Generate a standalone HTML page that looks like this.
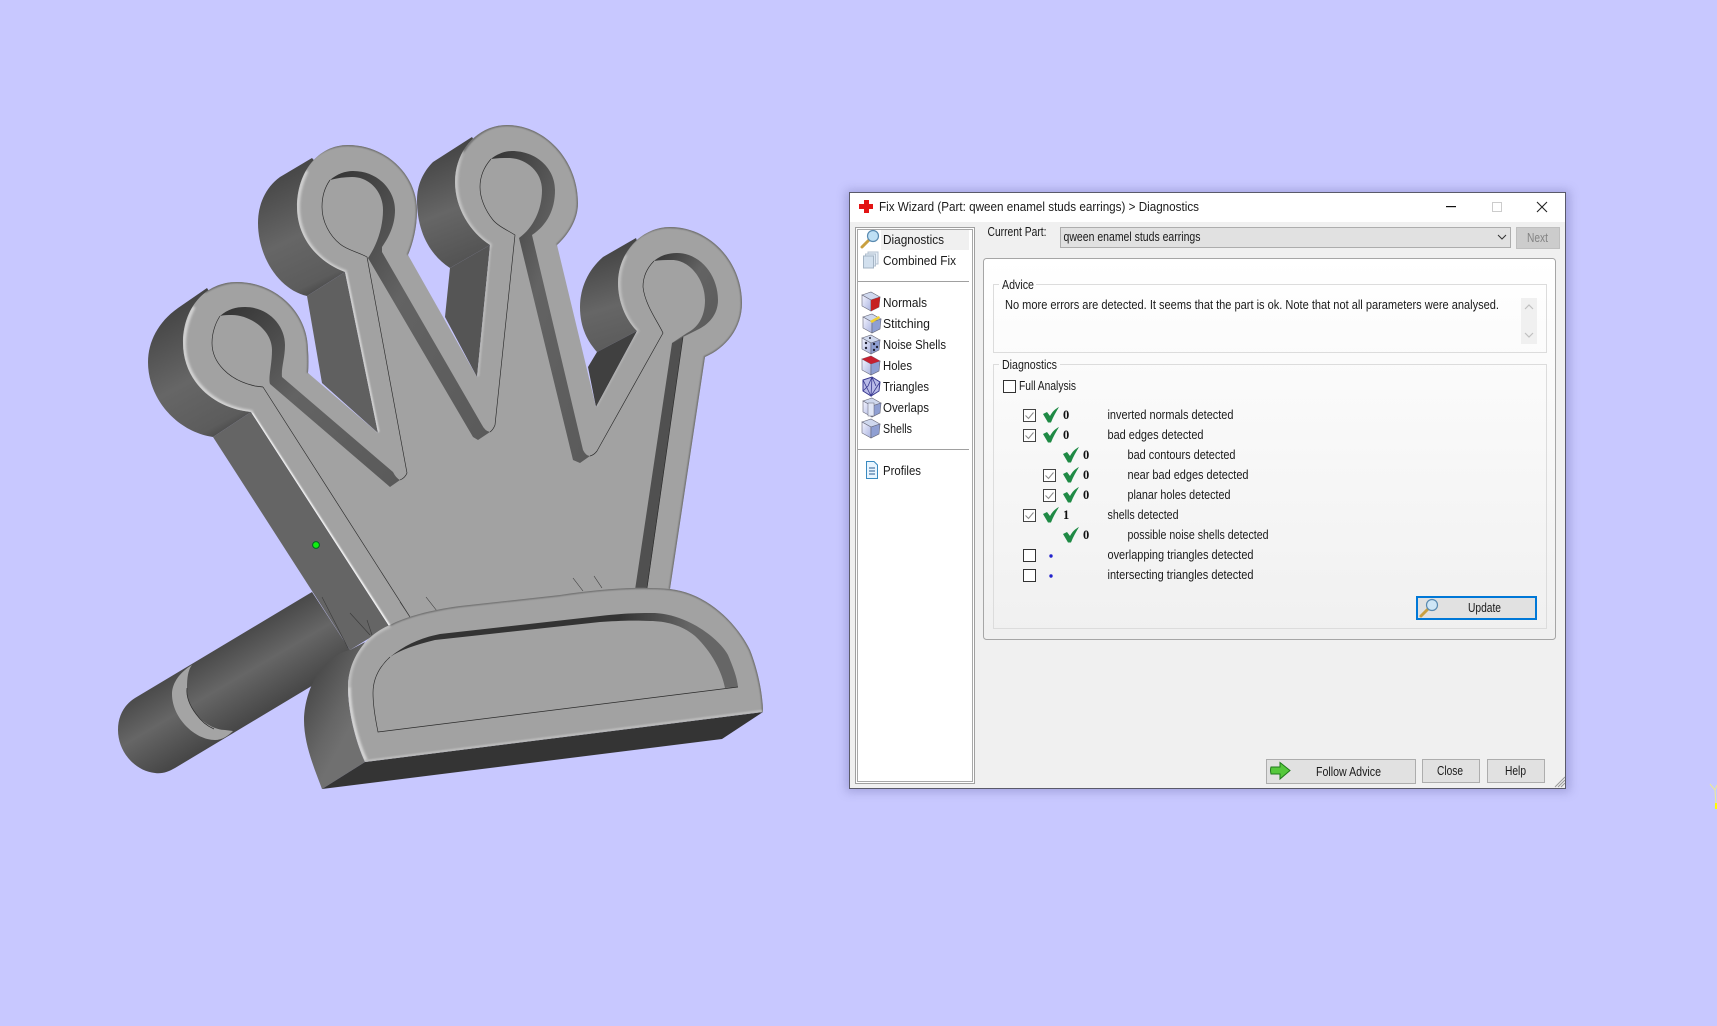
<!DOCTYPE html>
<html><head><meta charset="utf-8"><title>Fix Wizard</title>
<style>
html,body{margin:0;padding:0;background:#c8c8ff;width:1717px;height:1026px;overflow:hidden}
svg{display:block;position:absolute;left:0;top:0}
text{font-family:"Liberation Sans",sans-serif;font-size:12.5px;fill:#1a1a1a}
.n{font-family:"Liberation Serif",serif;font-weight:bold;font-size:12.5px;fill:#111}
</style></head><body>
<svg width="1717" height="1026" viewBox="0 0 1717 1026" xmlns="http://www.w3.org/2000/svg">
<defs>
<filter id="b1" x="-20%" y="-20%" width="140%" height="140%"><feGaussianBlur stdDeviation="0.8"/></filter>
<filter id="b2" x="-20%" y="-20%" width="140%" height="140%"><feGaussianBlur stdDeviation="1.2"/></filter>
<filter id="sh" x="-5%" y="-5%" width="110%" height="110%"><feGaussianBlur stdDeviation="5"/></filter>
<clipPath id="fc"><path d="M251 412C212 408 183 380 183 343C183 308 205 282 237 282C275 282 308 312 308 350Q309 362 308 373L378 433L345 272C318 262 297 238 297 207C297 172 318 145 348 145C386 145 417 175 417 210C417 228 413 243 408 255L477 377L490 245C470 232 455 208 455 182C455 150 478 125 507 125C545 125 578 160 578 203C578 220 568 235 557 245L596 407L637 331C626 320 618 302 618 283C618 252 642 227 670 227C710 227 742 262 742 303C742 328 726 348 705 357L670 589L400 640L389 626Z"/></clipPath>
<clipPath id="bc"><path d="M348 687C348 660 365 635 390 625C405 617 430 610 460 606L560 595C600 589 640 586 670 589C705 593 735 620 750 650C758 670 763 695 763 712L365 762C355 740 348 710 348 687Z"/></clipPath>
<linearGradient id="pin" gradientUnits="userSpaceOnUse" x1="205" y1="640" x2="255" y2="725"><stop offset="0" stop-color="#3f3f3f"/><stop offset=".5" stop-color="#666"/><stop offset="1" stop-color="#434343"/></linearGradient>
<linearGradient id="s1" gradientUnits="userSpaceOnUse" x1="165" y1="310" x2="235" y2="440"><stop offset="0" stop-color="#444"/><stop offset=".5" stop-color="#666"/><stop offset=".85" stop-color="#5c5c5c"/><stop offset="1" stop-color="#3a3a3a"/></linearGradient>
<linearGradient id="s2" gradientUnits="userSpaceOnUse" x1="275" y1="170" x2="335" y2="295"><stop offset="0" stop-color="#444"/><stop offset=".5" stop-color="#666"/><stop offset=".85" stop-color="#5c5c5c"/><stop offset="1" stop-color="#3a3a3a"/></linearGradient>
<linearGradient id="s3" gradientUnits="userSpaceOnUse" x1="435" y1="150" x2="480" y2="265"><stop offset="0" stop-color="#444"/><stop offset=".5" stop-color="#666"/><stop offset="1" stop-color="#505050"/></linearGradient>
<linearGradient id="s4" gradientUnits="userSpaceOnUse" x1="600" y1="250" x2="630" y2="350"><stop offset="0" stop-color="#444"/><stop offset=".55" stop-color="#666"/><stop offset="1" stop-color="#5a5a5a"/></linearGradient>
<linearGradient id="w" x1="0" y1="0" x2="1" y2="1"><stop offset="0" stop-color="#333"/><stop offset=".45" stop-color="#636363"/><stop offset="1" stop-color="#5a5a5a"/></linearGradient>
<linearGradient id="bw" gradientUnits="userSpaceOnUse" x1="620" y1="0" x2="690" y2="0"><stop offset="0" stop-color="#333"/><stop offset="1" stop-color="#666"/></linearGradient>
<linearGradient id="bl" gradientUnits="userSpaceOnUse" x1="305" y1="680" x2="360" y2="710"><stop offset="0" stop-color="#464646"/><stop offset=".7" stop-color="#666"/><stop offset="1" stop-color="#707070"/></linearGradient>
<linearGradient id="panel" x1="0" y1="0" x2="0" y2="1"><stop offset="0" stop-color="#fff"/><stop offset="1" stop-color="#f0f0f0"/></linearGradient>
<linearGradient id="face" x1="0" y1="0" x2="1" y2="1"><stop offset="0" stop-color="#f4f4ff"/><stop offset="1" stop-color="#aab4e0"/></linearGradient>
<g id="cube">
<path d="M1 3L10 0L19 5L10 8Z" fill="#cfd8ee" stroke="#667" stroke-width=".6"/>
<path d="M1 3L10 8L10 19L1 14Z" fill="url(#face)" stroke="#667" stroke-width=".6"/>
<path d="M10 8L19 5L18 15L10 19Z" fill="#8f9fd2" stroke="#667" stroke-width=".6"/>
</g>
<path id="ck" d="M0 7L4 5L7 9C9 5 12 2 16 0C13 5 10 10 8 15.5L5 15.5Z" fill="#1f8a45"/>
<g id="cb"><rect x=".5" y=".5" width="12" height="12" fill="#fff" stroke="#444"/><path d="M2.5 6.5L5.5 9.5L10.5 3.5" fill="none" stroke="#888" stroke-width="1"/></g>
<g id="ub"><rect x=".5" y=".5" width="12" height="12" fill="#fff" stroke="#333"/></g>
</defs>

<rect width="1717" height="1026" fill="#c8c8ff"/>

<!-- PIN -->
<path d="M135 698L312 592L350 650L350 663L175 768C168 772 162 774 155 773C135 771 118 752 118 730C118 716 124 705 135 698Z" fill="url(#pin)"/>
<path d="M192 665C180 672 172 683 172 694C172 718 195 740 215 740C222 740 228 736 233 731L225 730C216 730 204 724 196 714C190 706 186 697 187 688C187 678 188 670 192 665Z" fill="#a4a4a4"/>
<path d="M187 688C186 697 190 706 196 714C201 721 207 726 214 729" fill="none" stroke="#2e2e2e" stroke-width=".7"/>

<!-- SIDE WALLS -->
<path d="M207 288L178 308C158 322 148 342 148 362C148 400 178 432 213 437L251 412L240 340Z" fill="url(#s1)"/>
<path d="M213 437L251 412L389 626L350 650Z" fill="#656565"/>
<path d="M312 158L280 177C265 188 258 205 258 223C258 258 280 290 307 296L345 272L350 200Z" fill="url(#s2)"/>
<path d="M307 296L345 272L378 433L322 383Z" fill="#606060"/>
<path d="M472 137L433 162C423 172 417 185 417 200C417 232 430 255 450 268L490 245L500 180Z" fill="url(#s3)"/>
<path d="M450 268L490 245L477 377L445 317Z" fill="#555"/>
<path d="M636 238L603 257C588 270 580 288 580 307C580 328 588 342 597 352L637 331L650 280Z" fill="url(#s4)"/>
<path d="M597 352L637 331L596 407L588 367Z" fill="#404040"/>

<!-- FRONT -->
<path d="M251 412C212 408 183 380 183 343C183 308 205 282 237 282C275 282 308 312 308 350Q309 362 308 373L378 433L345 272C318 262 297 238 297 207C297 172 318 145 348 145C386 145 417 175 417 210C417 228 413 243 408 255L477 377L490 245C470 232 455 208 455 182C455 150 478 125 507 125C545 125 578 160 578 203C578 220 568 235 557 245L596 407L637 331C626 320 618 302 618 283C618 252 642 227 670 227C710 227 742 262 742 303C742 328 726 348 705 357L670 589L400 640L389 626Z" fill="#a2a2a2"/>
<g clip-path="url(#fc)">
<path d="M237 282C275 282 308 312 308 350Q309 362 308 373M408 255C413 243 417 228 417 210C417 175 386 145 348 145C328 145 312 155 303 172M457 165C465 142 484 125 507 125C545 125 578 160 578 203C578 220 568 235 557 245M622 258C630 240 648 227 670 227C710 227 742 262 742 303C742 328 726 348 705 357L670 589M205 292C215 286 225 282 237 282" fill="none" stroke="#6e6e6e" stroke-width="2.4" filter="url(#b1)"/>
<g fill="none" stroke-linecap="round">
<path d="M252 414L389 626" stroke="#f6f6f6" stroke-width="3.4" filter="url(#b1)"/>
<path d="M251 412C213 407 185 380 184 345C184 332 187 320 193 308" stroke="#d8d8d8" stroke-width="3.6" filter="url(#b2)"/>
<path d="M346 274L378 431" stroke="#d0d0d0" stroke-width="3" filter="url(#b1)"/>
<path d="M345 272C318 262 298 238 298 207C298 195 301 183 306 172" stroke="#d4d4d4" stroke-width="3.6" filter="url(#b2)"/>
<path d="M490 247L478 375" stroke="#b8b8b8" stroke-width="3" filter="url(#b1)"/>
<path d="M490 245C470 232 456 208 456 182C456 172 458 162 462 152" stroke="#c8c8c8" stroke-width="3.6" filter="url(#b2)"/>
<path d="M636 333L597 405" stroke="#b0b0b0" stroke-width="3" filter="url(#b1)"/>
<path d="M637 331C626 320 619 302 619 283C619 274 621 265 625 256" stroke="#c4c4c4" stroke-width="3.2" filter="url(#b2)"/>
</g>
</g>

<!-- RECESS WALLS -->
<path d="M220 316C228 309 236 307 245 307C268 307 285 325 285 345C285 358 281 368 282 377L393 472Q396 478 400 480L390 487L270 384C268 378 272 365 272 350C272 330 250 315 232 315C228 315 224 315 220 316Z" fill="url(#w)"/>
<path d="M330 180C337 174 345 171 353 171C378 171 395 190 395 210C395 225 389 237 382 247L382 252L482 425Q485 431 490 432L478 440L473 437L368 258C375 248 383 230 383 210C383 192 370 177 352 177C345 177 337 178 330 180Z" fill="url(#w)"/>
<path d="M491 159C497 154 505 151 512 151C536 151 555 168 555 190C555 210 547 225 532 235L583 450Q586 456 590 456L580 463L573 460L519 238C533 228 542 210 542 190C542 172 527 159 510 158C503 158 497 158 491 159Z" fill="url(#w)"/>
<path d="M654 261C661 255 669 253 677 253C700 253 718 275 718 300C718 315 708 325 697 330L683 337L672 343L687 333C697 328 705 318 705 300C705 280 690 260 672 260C666 260 660 260 654 261Z" fill="url(#w)"/>
<path d="M672 343L683 337L647 590L635 590Z" fill="#505050"/>

<!-- plate lines -->
<g fill="none" stroke="#2a2a2a" stroke-width=".65">
<path d="M263 387L255 386C228 380 212 362 212 343C212 332 216 322 220 316"/>
<path d="M263 387L410 617"/>
<path d="M400 480Q405 478 407 473L367 257C358 252 347 250 340 244C330 236 322 222 322 207C322 196 325 187 330 180"/>
<path d="M490 432Q493 430 495 425L515 235C507 230 498 226 493 220C485 210 480 198 480 187C480 176 484 167 491 159"/>
<path d="M590 456Q594 455 597 451L663 333C658 322 645 305 643 287C643 277 647 268 654 261"/>
<path d="M683 337L647 588"/>
<path d="M322 597L348 648M350 613L370 635M367 620L372 635M400 602L410 617M426 597L437 611M573 578L583 591M594 576L602 588" stroke="#3a3a3a" stroke-width=".6"/>
</g>

<!-- BASE -->
<path d="M350 650C325 655 305 685 304 720C304 745 315 770 322 789L365 762C355 740 348 710 348 687C348 670 355 660 365 642Z" fill="url(#bl)"/>
<path d="M365 762L763 712L722 739L322 789Z" fill="#343434"/>
<path d="M348 687C348 660 365 635 390 625C405 617 430 610 460 606L560 595C600 589 640 586 670 589C705 593 735 620 750 650C758 670 763 695 763 712L365 762C355 740 348 710 348 687Z" fill="#a2a2a2"/>
<g clip-path="url(#bc)" fill="none">
<path d="M390 625C405 617 430 610 460 606L560 595C600 589 640 586 670 589C705 593 735 620 750 650C758 670 763 695 763 712" stroke="#6e6e6e" stroke-width="2.4" filter="url(#b1)"/>
<path d="M349 687C349 660 365 636 390 626" stroke="#c4c4c4" stroke-width="3" filter="url(#b2)"/>
<path d="M349 687C349 710 356 740 366 761" stroke="#dcdcdc" stroke-width="3.4" filter="url(#b2)"/>
<path d="M366 761L762 711" stroke="#bcbcbc" stroke-width="2.4" filter="url(#b1)"/>
</g>
<path d="M390 657C405 645 420 638 440 634L600 616C625 613 640 613 655 613C690 615 720 640 728 655C733 667 737 677 738 687L725 688C722 672 712 652 695 636C682 625 665 621 650 621C630 620 615 621 600 622L435 640C415 645 400 650 390 657Z" fill="url(#bw)"/>
<path d="M390 657C378 668 373 680 373 693C373 708 376 722 378 732L738 687" fill="none" stroke="#2a2a2a" stroke-width=".65"/>

<!-- green marker -->
<circle cx="316" cy="545" r="3.4" fill="#10f010" stroke="#062" stroke-width="1"/>
<path d="M1710 784L1715 790L1716 806M1717 785L1715 790" fill="none" stroke="#ecec90" stroke-width="1"/>
<rect x="1715" y="803" width="2" height="6" fill="#ff0"/>

<!-- DIALOG -->
<rect x="846" y="190" width="724" height="602" fill="#6060a0" opacity=".35" filter="url(#sh)"/>
<rect x="849.5" y="192.5" width="716" height="596" fill="#f0f0f0" stroke="#5a5a6a"/>
<rect x="850" y="193" width="715" height="29" fill="#fff"/>
<path d="M864 200H869V204H873V209H869V213H864V209H859V204H864Z" fill="#e31414"/>
<text x="879" y="211" textLength="320" lengthAdjust="spacingAndGlyphs">Fix Wizard (Part: qween enamel studs earrings) &gt; Diagnostics</text>
<rect x="1446" y="206" width="10" height="1.2" fill="#111"/>
<rect x="1492.5" y="202.5" width="9" height="9" fill="none" stroke="#ccc"/>
<path d="M1537 202L1547 212M1547 202L1537 212" stroke="#222" stroke-width="1.1"/>

<!-- list -->
<rect x="855.5" y="227.5" width="119" height="556" fill="#fff" stroke="#a0a0a0"/>
<rect x="857.5" y="229.5" width="115" height="552" fill="#fff" stroke="#a8a8a8"/>
<rect x="881" y="230" width="88" height="20" fill="#f0f0f0"/>
<rect x="858" y="281" width="111" height="1" fill="#a0a0a0"/>
<rect x="858" y="449" width="111" height="1" fill="#a0a0a0"/>

<!-- icons -->
<g transform="translate(861,230)"><path d="M1 17L8 10" stroke="#c9a040" stroke-width="3" stroke-linecap="round"/><circle cx="12" cy="6" r="5.5" fill="#bfe0f5" stroke="#5a8ab0" stroke-width="1.2"/></g>
<g transform="translate(863,252)"><rect x="5" y="0" width="10" height="12" fill="#e6eef8" stroke="#b4c2d0"/><rect x="2.5" y="2" width="10" height="12" fill="#dde8f4" stroke="#b4c2d0"/><rect x="0.5" y="4" width="10" height="12" fill="#d2e0ee" stroke="#a4b4c4"/></g>
<g transform="translate(861,292)"><use href="#cube"/><path d="M10 8L19 5L18 15L10 19Z" fill="#c62020"/></g>
<g transform="translate(862,314)"><use href="#cube"/><path d="M8 7L17 2L18 4L10 9Z" fill="#f0d030"/></g>
<g transform="translate(861,335)"><use href="#cube"/><g fill="#223"><circle cx="5" cy="8" r="1.2"/><circle cx="5" cy="13" r="1.2"/><circle cx="13" cy="9" r="1.2"/><circle cx="16" cy="12" r="1.2"/><circle cx="13" cy="15" r="1.2"/><circle cx="9" cy="3" r="1"/></g></g>
<g transform="translate(861,356)"><use href="#cube"/><path d="M1 3L10 0L19 5L10 8Z" fill="#c62030"/></g>
<g transform="translate(861,377)"><path d="M2 3L11 0L19 5L18 14L10 19L2 14Z" fill="#b9bbe8" stroke="#3a3a90" stroke-width="1"/><path d="M2 3L10 19L11 0M19 5L10 19M11 0L7 9L2 14M11 0L15 9" fill="none" stroke="#3a3a90" stroke-width=".8"/></g>
<g transform="translate(862,398)"><use href="#cube"/><rect x="6" y="5" width="6" height="13" fill="#e0e6f6" stroke="#667" stroke-width=".5"/></g>
<g transform="translate(861,419)"><use href="#cube"/></g>
<g transform="translate(866,461)"><path d="M.5 .5H8L11.5 4V17.5H.5Z" fill="#e8f5ff" stroke="#3a8ac0"/><path d="M3 7H9M3 10H9M3 13H9" stroke="#2a5a90" stroke-width="1"/></g>

<text x="883" y="244" textLength="61" lengthAdjust="spacingAndGlyphs">Diagnostics</text>
<text x="883" y="265" textLength="73" lengthAdjust="spacingAndGlyphs">Combined Fix</text>
<text x="883" y="307" textLength="44" lengthAdjust="spacingAndGlyphs">Normals</text>
<text x="883" y="328" textLength="47" lengthAdjust="spacingAndGlyphs">Stitching</text>
<text x="883" y="349" textLength="63" lengthAdjust="spacingAndGlyphs">Noise Shells</text>
<text x="883" y="370" textLength="29" lengthAdjust="spacingAndGlyphs">Holes</text>
<text x="883" y="391" textLength="46" lengthAdjust="spacingAndGlyphs">Triangles</text>
<text x="883" y="412" textLength="46" lengthAdjust="spacingAndGlyphs">Overlaps</text>
<text x="883" y="433" textLength="29" lengthAdjust="spacingAndGlyphs">Shells</text>
<text x="883" y="475" textLength="38" lengthAdjust="spacingAndGlyphs">Profiles</text>

<!-- top row -->
<text x="987.5" y="236" textLength="59" lengthAdjust="spacingAndGlyphs">Current Part:</text>
<rect x="1060.5" y="227.5" width="450" height="20" fill="#e1e1e1" stroke="#adadad"/>
<text x="1063.5" y="241" textLength="137" lengthAdjust="spacingAndGlyphs">qween enamel studs earrings</text>
<path d="M1498 235L1502 239L1506 235" fill="none" stroke="#333" stroke-width="1"/>
<rect x="1516.5" y="227.5" width="43" height="21" fill="#ccc" stroke="#bfbfbf"/>
<text x="1527" y="242" textLength="21" lengthAdjust="spacingAndGlyphs" style="fill:#838383">Next</text>

<!-- panel -->
<rect x="983.5" y="258.5" width="572" height="381" rx="3" fill="url(#panel)" stroke="#a6a6a6"/>

<!-- Advice -->
<rect x="993.5" y="284.5" width="553" height="68" fill="none" stroke="#dcdcdc"/>
<rect x="999" y="280" width="37" height="10" fill="#fdfdfd"/>
<text x="1002" y="289" textLength="32" lengthAdjust="spacingAndGlyphs">Advice</text>
<text x="1005" y="309" textLength="494" lengthAdjust="spacingAndGlyphs">No more errors are detected. It seems that the part is ok. Note that not all parameters were analysed.</text>
<rect x="1521" y="298" width="16" height="46" fill="#f0f0f0"/>
<path d="M1525 309L1529 305L1533 309M1525 333L1529 337L1533 333" fill="none" stroke="#c0c0c0" stroke-width="1.2"/>

<!-- Diagnostics -->
<rect x="993.5" y="364.5" width="553" height="264" fill="none" stroke="#dcdcdc"/>
<rect x="999" y="360" width="61" height="10" fill="#fbfbfb"/>
<text x="1002" y="369" textLength="55" lengthAdjust="spacingAndGlyphs">Diagnostics</text>
<use href="#ub" x="1003" y="380"/>
<text x="1019" y="390" textLength="57" lengthAdjust="spacingAndGlyphs">Full Analysis</text>

<use href="#cb" x="1023" y="409"/><use href="#ck" x="1043" y="407"/><text class="n" x="1063" y="419">0</text>
<text x="1107.5" y="419" textLength="126" lengthAdjust="spacingAndGlyphs">inverted normals detected</text>
<use href="#cb" x="1023" y="429"/><use href="#ck" x="1043" y="427"/><text class="n" x="1063" y="439">0</text>
<text x="1107.5" y="439" textLength="96" lengthAdjust="spacingAndGlyphs">bad edges detected</text>
<use href="#ck" x="1063" y="447"/><text class="n" x="1083" y="459">0</text>
<text x="1127.5" y="459" textLength="108" lengthAdjust="spacingAndGlyphs">bad contours detected</text>
<use href="#cb" x="1043" y="469"/><use href="#ck" x="1063" y="467"/><text class="n" x="1083" y="479">0</text>
<text x="1127.5" y="479" textLength="121" lengthAdjust="spacingAndGlyphs">near bad edges detected</text>
<use href="#cb" x="1043" y="489"/><use href="#ck" x="1063" y="487"/><text class="n" x="1083" y="499">0</text>
<text x="1127.5" y="499" textLength="103" lengthAdjust="spacingAndGlyphs">planar holes detected</text>
<use href="#cb" x="1023" y="509"/><use href="#ck" x="1043" y="507"/><text class="n" x="1063" y="519">1</text>
<text x="1107.5" y="519" textLength="71" lengthAdjust="spacingAndGlyphs">shells detected</text>
<use href="#ck" x="1063" y="527"/><text class="n" x="1083" y="539">0</text>
<text x="1127.5" y="539" textLength="141" lengthAdjust="spacingAndGlyphs">possible noise shells detected</text>
<use href="#ub" x="1023" y="549"/><circle cx="1051" cy="556" r="1.7" fill="#2222cc"/>
<text x="1107.5" y="559" textLength="146" lengthAdjust="spacingAndGlyphs">overlapping triangles detected</text>
<use href="#ub" x="1023" y="569"/><circle cx="1051" cy="576" r="1.7" fill="#2222cc"/>
<text x="1107.5" y="579" textLength="146" lengthAdjust="spacingAndGlyphs">intersecting triangles detected</text>

<!-- Update -->
<rect x="1417" y="597" width="119" height="22" fill="#e1e1e1" stroke="#0078d7" stroke-width="2"/>
<g transform="translate(1420,599)"><path d="M1 17L8 10" stroke="#c9a040" stroke-width="3" stroke-linecap="round"/><circle cx="12" cy="6" r="5.5" fill="#cfe6f6" stroke="#5a8ab0" stroke-width="1.2"/></g>
<text x="1468" y="612" textLength="33" lengthAdjust="spacingAndGlyphs">Update</text>

<!-- bottom buttons -->
<rect x="1266.5" y="759.5" width="149" height="24" fill="#e1e1e1" stroke="#adadad"/>
<path d="M1271 767H1280V762.5L1290 770.5L1280 779V774H1271Q1270 770 1271 767Z" fill="#55c83c" stroke="#1f7a1a" stroke-width="1"/>
<text x="1316" y="776" textLength="65" lengthAdjust="spacingAndGlyphs">Follow Advice</text>
<rect x="1422.5" y="759.5" width="57" height="23" fill="#e1e1e1" stroke="#adadad"/>
<text x="1437" y="775" textLength="26" lengthAdjust="spacingAndGlyphs">Close</text>
<rect x="1487.5" y="759.5" width="57" height="23" fill="#e1e1e1" stroke="#adadad"/>
<text x="1505" y="775" textLength="21" lengthAdjust="spacingAndGlyphs">Help</text>
<path d="M1555 787L1565 777M1558 787L1565 780M1561 787L1565 783" stroke="#999" stroke-width="1"/>
</svg>
</body></html>
